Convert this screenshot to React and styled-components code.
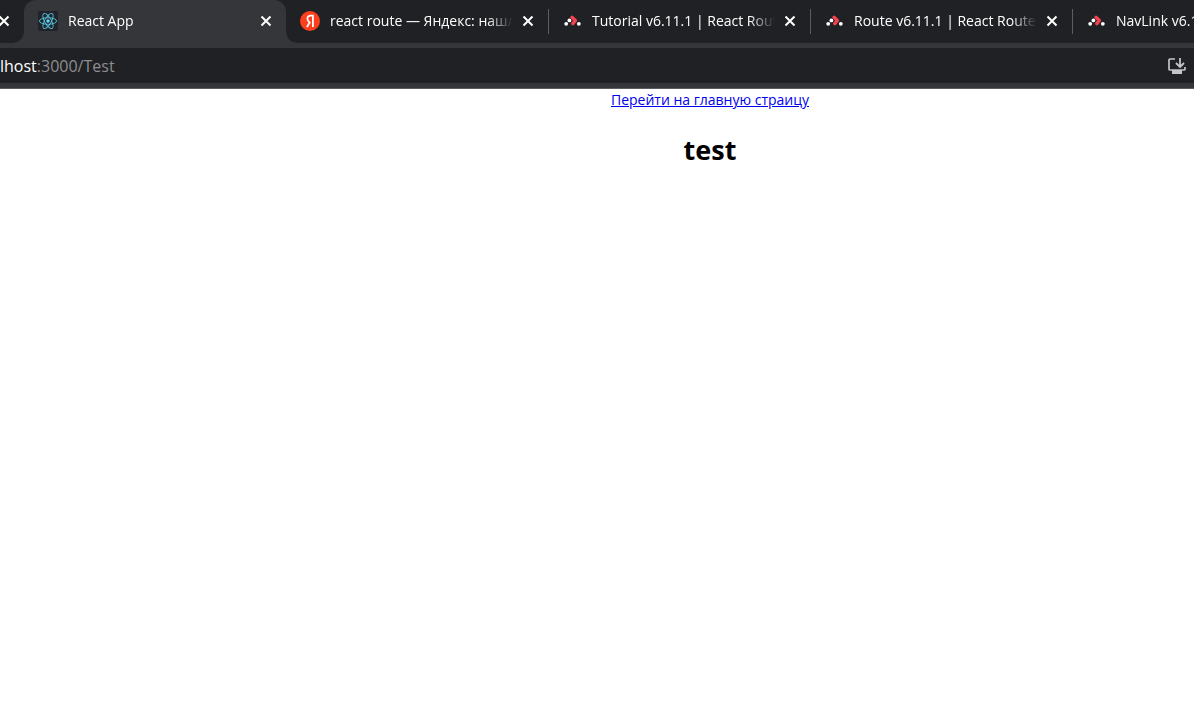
import React from "react";
import styled, { createGlobalStyle, css } from "styled-components";

const GlobalStyle = createGlobalStyle`
  * { box-sizing: border-box; }
  body { margin: 0; background: #fff; font-family: "Open Sans", "Noto Sans", sans-serif; }
  button { font: inherit; }
`;

const Window = styled.div`
  overflow: hidden;
`;

const TabStrip = styled.nav`
  display: flex;
  height: 43px;
  overflow: hidden;
  background: #202124;
`;

const activeShape = css`
  background: #35363a;
  border-radius: 12px 12px 0 0;
  &::before,
  &::after {
    content: "";
    position: absolute;
    bottom: 0;
    width: 10px;
    height: 10px;
  }
  &::before {
    left: -10px;
    background: radial-gradient(circle at 0 0, transparent 9px, #35363a 10px);
  }
  &::after {
    right: -10px;
    background: radial-gradient(circle at 100% 0, transparent 9px, #35363a 10px);
  }
`;

const Tab = styled.div`
  position: relative;
  display: flex;
  flex: none;
  align-items: center;
  width: 262px;
  padding: 0 13px 1px 14px;
  color: #fff;
  ${(p) => p.$active && activeShape}
`;

const TabEdge = styled(Tab)`
  width: 24px;
  padding: 0 0 1px;
`;

const Separator = styled.span`
  position: absolute;
  top: 9px;
  left: 0;
  width: 1px;
  height: 25px;
  background: #5b5d61;
`;

const TabLink = styled.a`
  display: flex;
  flex: 1;
  align-items: center;
  gap: 10px;
  min-width: 0;
  color: inherit;
  text-decoration: none;
`;

const TabTitle = styled.span`
  flex: 1;
  overflow: hidden;
  font-size: 14px;
  line-height: 20px;
  white-space: nowrap;
  mask-image: linear-gradient(to right, #000 calc(100% - 26px), transparent);
`;

const CloseButton = styled.button`
  display: flex;
  flex: none;
  align-items: center;
  justify-content: center;
  width: 14px;
  height: 20px;
  margin-left: ${(p) => (p.$edge ? "-3px" : "8px")};
  padding: 0;
  border: 0;
  background: none;
  color: #fff;
`;

const Icon = styled.svg`
  display: block;
  flex: none;
`;

const Toolbar = styled.header`
  display: flex;
  flex-direction: column;
  padding: 5px 0;
  background: #35363a;
  border-bottom: 1px solid #5b5c5f;
`;

const AddressBar = styled.div`
  display: flex;
  align-items: center;
  height: 35px;
  padding-right: 7px;
  background: #202124;
`;

const Address = styled.div`
  flex: 1;
  font-size: 16px;
  line-height: 24px;
  color: #8d8e90;
`;

const Host = styled.span`
  color: #fff;
`;

const InstallButton = styled.button`
  padding: 0;
  border: 0;
  background: none;
  color: #c4c5c7;
`;

const Page = styled.main`
  display: flex;
  flex-direction: column;
  align-items: center;
  padding-left: 226px;
`;

const HomeLink = styled.a`
  font-size: 14px;
  line-height: 22px;
  color: #0000ee;
`;

const Heading = styled.h1`
  margin: 20px 0;
  font-size: 27px;
  line-height: 38px;
  font-weight: 700;
  color: #000;
`;

const ReactIcon = () => (
  <Icon width="20" height="20" viewBox="0 0 20 20">
    <rect width="20" height="20" rx="1.5" fill="#20232a" />
    <g fill="none" stroke="#58c4dc" strokeWidth="0.9">
      <ellipse cx="10" cy="10" rx="8.6" ry="3.3" />
      <ellipse cx="10" cy="10" rx="8.6" ry="3.3" transform="rotate(60 10 10)" />
      <ellipse cx="10" cy="10" rx="8.6" ry="3.3" transform="rotate(120 10 10)" />
    </g>
    <circle cx="10" cy="10" r="1.7" fill="#61dafb" />
  </Icon>
);

const YandexIcon = () => (
  <Icon width="20" height="20" viewBox="0 0 20 20">
    <circle cx="10" cy="10" r="10" fill="#fc3f1d" />
    <path
      d="M12.9 16V4.6H11C8.7 4.6 7.4 5.9 7.4 7.8c0 1.8.9 2.6 2.3 3.6M10.2 10.8L6.9 16"
      fill="none"
      stroke="#fff"
      strokeWidth="1.8"
    />
  </Icon>
);

const RouterIcon = () => (
  <Icon width="20" height="20" viewBox="0 0 20 20">
    <path
      d="M10 6.3L13.4 9.4L10.8 12.6"
      fill="none"
      stroke="#f44250"
      strokeWidth="3.4"
      strokeLinecap="round"
      strokeLinejoin="round"
    />
    <circle cx="7.4" cy="9.4" r="1.9" fill="#fff" />
    <circle cx="4.2" cy="12.8" r="1.9" fill="#fff" />
    <circle cx="16.8" cy="12.8" r="1.9" fill="#fff" />
  </Icon>
);

const CloseIcon = () => (
  <Icon width="12" height="12" viewBox="0 0 12 12">
    <path d="M1.5 1.5l9 9M10.5 1.5l-9 9" stroke="currentColor" strokeWidth="2" />
  </Icon>
);

const InstallIcon = () => (
  <Icon width="20" height="18" viewBox="0 0 20 18">
    <path d="M8 2H3Q2 2 2 3V12Q2 13 3 13H17Q18 13 18 12V10" fill="none" stroke="currentColor" strokeWidth="1.7" />
    <path d="M5 13H15V17H5Z" fill="currentColor" />
    <path d="M13 1V9M9 6L13 10L17 6" fill="none" stroke="currentColor" strokeWidth="1.8" />
  </Icon>
);

const tabs = [
  { title: "React App", icon: ReactIcon, active: true },
  { title: "react route — Яндекс: нашлось", icon: YandexIcon },
  { title: "Tutorial v6.11.1 | React Router", icon: RouterIcon, separated: true },
  { title: "Route v6.11.1 | React Router", icon: RouterIcon, separated: true },
  { title: "NavLink v6.11.1 | React Router", icon: RouterIcon, separated: true },
];

export default function App() {
  return (
    <Window>
      <GlobalStyle />
      <TabStrip aria-label="Tabs">
        <TabEdge>
          <CloseButton $edge aria-label="Close tab">
            <CloseIcon />
          </CloseButton>
        </TabEdge>
        {tabs.map(({ title, icon: Favicon, active, separated }) => (
          <Tab key={title} $active={active}>
            {separated && <Separator />}
            <TabLink href="#">
              <Favicon />
              <TabTitle>{title}</TabTitle>
            </TabLink>
            <CloseButton aria-label={`Close ${title}`}>
              <CloseIcon />
            </CloseButton>
          </Tab>
        ))}
      </TabStrip>
      <Toolbar>
        <AddressBar>
          <Address>
            <Host>lhost</Host>:3000/Test
          </Address>
          <InstallButton aria-label="Install app">
            <InstallIcon />
          </InstallButton>
        </AddressBar>
      </Toolbar>
      <Page>
        <HomeLink href="/">Перейти на главную страицу</HomeLink>
        <Heading>test</Heading>
      </Page>
    </Window>
  );
}
